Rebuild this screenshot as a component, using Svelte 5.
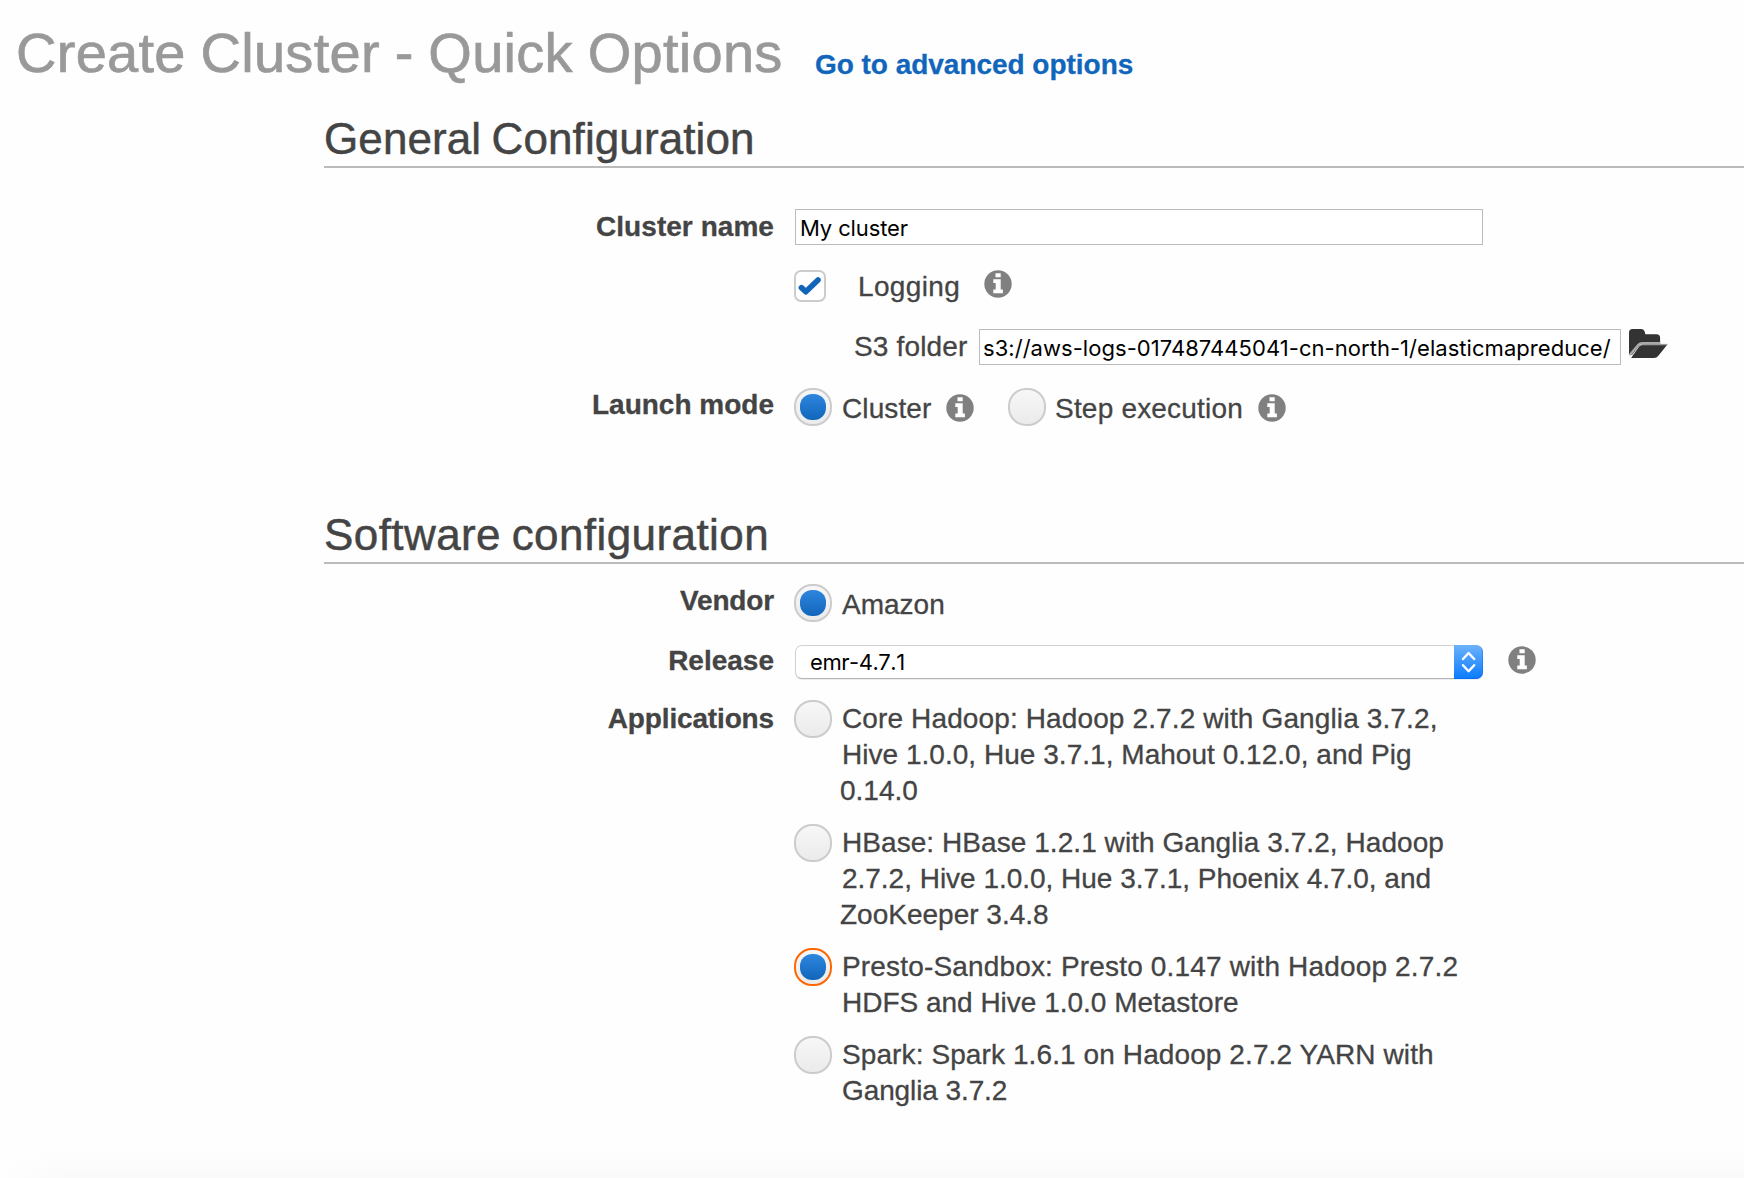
<script>
  let clusterName = $state('My cluster');
  let s3Folder = $state('s3://aws-logs-017487445041-cn-north-1/elasticmapreduce/');

  // Each application bundle, with its description split into lines and their tracking in px.
  const applications = [
    {
      lines: [
        { text: 'Core Hadoop: Hadoop 2.7.2 with Ganglia 3.7.2,', track: 0.125 },
        { text: 'Hive 1.0.0, Hue 3.7.1, Mahout 0.12.0, and Pig', track: 0.03 },
        { text: '0.14.0', track: 0 }
      ]
    },
    {
      lines: [
        { text: 'HBase: HBase 1.2.1 with Ganglia 3.7.2, Hadoop', track: 0.06 },
        { text: '2.7.2, Hive 1.0.0, Hue 3.7.1, Phoenix 4.7.0, and', track: -0.02 },
        { text: 'ZooKeeper 3.4.8', track: 0 }
      ]
    },
    {
      selected: true,
      lines: [
        { text: 'Presto-Sandbox: Presto 0.147 with Hadoop 2.7.2', track: 0.165 },
        { text: 'HDFS and Hive 1.0.0 Metastore', track: -0.01 }
      ]
    },
    {
      lines: [
        { text: 'Spark: Spark 1.6.1 on Hadoop 2.7.2 YARN with', track: 0.1 },
        { text: 'Ganglia 3.7.2', track: -0.1 }
      ]
    }
  ];
</script>

{#snippet info()}
  <svg class="info" viewBox="0 0 28 28" aria-label="Info">
    <circle cx="14" cy="14" r="13.7" fill="#808080" />
    <path d="M11.5 3.2h5.2v4h-5.2zM9.3 9.3h7.4v10.3h2.2v3.6H9.3v-3.6h2.4v-6.7H9.3z" fill="#fff" />
  </svg>
{/snippet}

{#snippet radio(selected, focused)}
  <span class="radio" class:selected class:focused role="radio" aria-checked={selected} tabindex="0"></span>
{/snippet}

<div class="page">
  <header>
    <h1>Create Cluster - Quick Options</h1>
    <a href="#advanced">Go to advanced options</a>
  </header>

  <section class="general">
    <h2>General Configuration</h2>
    <div class="row name-row">
      <span class="label wide">Cluster name</span>
      <input class="name-input" bind:value={clusterName} />
    </div>
    <div class="row logging-row">
      <span class="label"></span>
      <span class="checkbox" role="checkbox" aria-checked="true" tabindex="0">
        <svg viewBox="0 0 32 32">
          <path d="M7.4 17.6l4.4 4.2L24 10" fill="none" stroke="#1166bb" stroke-width="5.6" stroke-linecap="round" stroke-linejoin="round" />
        </svg>
      </span>
      <span class="text logging">Logging</span>
      {@render info()}
    </div>
    <div class="row folder-row">
      <span class="label"></span>
      <span class="text folder">S3 folder</span>
      <input class="folder-input" bind:value={s3Folder} />
      <svg class="folder-icon" viewBox="0 0 40 31">
        <path d="M1 26.5V4.5Q1 1 4.5 1H13q3 0 3.8 3l.5 2.2H28.5q3.6 0 3.6 3.6v5.8H13L4 27z" fill="#333" />
        <path d="M1.6 27.2L10.2 17q1.6-1.8 4.2-1.8h18" fill="none" stroke="#aaa" stroke-width="2.4" />
        <path d="M3.2 29.8L11.2 18.6q1.1-1.5 3-1.5H39l-8.6 10.7q-1.8 2.3-4.4 2.3H3.5z" fill="#333" />
        <path d="M14 16.6h25.4" stroke="#999" stroke-width="1.4" />
      </svg>
    </div>
    <div class="row launch-row">
      <span class="label">Launch mode</span>
      {@render radio(true, false)}
      <span class="text cluster">Cluster</span>
      {@render info()}
      <span class="second">{@render radio(false, false)}</span>
      <span class="text step">Step execution</span>
      {@render info()}
    </div>
  </section>

  <section class="software">
    <h2>Software configuration</h2>
    <div class="row vendor-row">
      <span class="label snug">Vendor</span>
      {@render radio(true, false)}
      <span class="text">Amazon</span>
    </div>
    <div class="row release-row">
      <span class="label">Release</span>
      <div class="select" role="combobox" aria-expanded="false" aria-controls="release" tabindex="0">
        <span class="value" id="release">emr-4.7.1</span>
        <span class="stepper">
          <svg viewBox="0 0 29 34">
            <path d="M9 14l5.6-6 5.6 6M9 20.2l5.6 6 5.6-6" fill="none" stroke="#fff" stroke-width="2.4" stroke-linecap="round" stroke-linejoin="round" />
          </svg>
        </span>
      </div>
      {@render info()}
    </div>
    <div class="row">
      <span class="label snug">Applications</span>
      <div class="apps">
        {#each applications as app}
          <div class="app">
            {@render radio(!!app.selected, !!app.selected)}
            <div class="text">
              {#each app.lines as line}
                <div class="line" style:letter-spacing="{line.track}px">{line.text}</div>
              {/each}
            </div>
          </div>
        {/each}
      </div>
    </div>
  </section>

  <div class="shade"></div>
</div>

<style>
  :global(body) {
    background: #fefefe;
  }
  .page {
    box-sizing: border-box;
    height: 1178px;
    display: flex;
    flex-direction: column;
    overflow: hidden;
    font: 28px/36px 'Liberation Sans', Arial, sans-serif;
    color: #444;
    white-space: nowrap;
    -webkit-text-stroke: 0.3px;
  }
  header {
    box-sizing: border-box;
    height: 114px;
    padding-left: 16px;
    display: flex;
    align-items: flex-start;
  }
  h1 {
    margin: 21px 0 0;
    width: 799px;
    font-size: 56px;
    line-height: 64px;
    font-weight: 400;
    letter-spacing: 0.27px;
    word-spacing: -1px;
    color: #999;
    -webkit-text-stroke: 0.7px;
  }
  header a {
    margin-top: 47px;
    font-weight: 700;
    letter-spacing: -0.03px;
    color: #1166bb;
    text-decoration: none;
  }
  section {
    margin-left: 324px;
  }
  .general {
    height: 396px;
  }
  h2 {
    margin: 0;
    padding-bottom: 2px;
    border-bottom: 2px solid #bbb;
    font-size: 44px;
    line-height: 50px;
    font-weight: 400;
    letter-spacing: 0.1px;
    word-spacing: -2px;
    -webkit-text-stroke: 0.5px;
  }
  .software h2 {
    letter-spacing: 0.42px;
  }
  .row {
    display: flex;
    align-items: flex-start;
  }
  .label {
    width: 450px;
    margin: 1px 20px 0 0;
    flex: none;
    text-align: right;
    font-weight: 700;
  }
  .label.wide {
    letter-spacing: 0.05px;
  }
  .label.snug {
    letter-spacing: -0.15px;
  }
  .name-row {
    height: 60px;
    padding-top: 40px;
  }
  .logging-row {
    height: 60px;
  }
  .folder-row {
    height: 58px;
  }
  .vendor-row {
    height: 60px;
    padding-top: 18px;
  }
  .release-row {
    height: 58px;
  }
  input {
    box-sizing: border-box;
    height: 36px;
    margin: 1px 0 0 1px;
    padding: 2px 0 0 4px;
    border: 1px solid #bbb;
    border-radius: 0;
    background: #fff;
    outline: none;
    font: 22px Inter, sans-serif;
    color: #000;
    -webkit-text-stroke: 0;
  }
  .name-input {
    width: 688px;
    letter-spacing: -0.13px;
  }
  .folder-input {
    width: 642px;
    margin-left: 12px;
    padding-left: 3px;
    letter-spacing: 0.043px;
  }
  .info {
    width: 28px;
    height: 28px;
    flex: none;
  }
  .checkbox {
    box-sizing: border-box;
    width: 32px;
    height: 32px;
    margin-top: 2px;
    border: 2px solid #ccc;
    border-radius: 7px;
    background: #fff;
  }
  .checkbox svg {
    display: block;
    width: 32px;
    height: 32px;
    margin: -2px;
  }
  .text {
    margin-top: 1px;
  }
  .logging {
    width: 126px;
    margin-left: 32px;
    letter-spacing: 0.35px;
  }
  .logging-row .info {
    margin: 2px 0 0 0;
  }
  .folder {
    width: 113px;
    margin-left: 60px;
    letter-spacing: 0.15px;
  }
  .folder-icon {
    width: 40px;
    height: 31px;
    margin-left: 7px;
  }
  .radio {
    box-sizing: border-box;
    display: block;
    width: 38px;
    height: 38px;
    flex: none;
    padding: 4px;
    border: 2px solid #ccc;
    border-radius: 18px;
    background: linear-gradient(#f7f7f7, #ebebeb);
  }
  .radio.selected::before {
    content: '';
    display: block;
    width: 26px;
    height: 26px;
    border-radius: 12px;
    background: linear-gradient(#2f86de, #1166bb);
  }
  .radio.focused {
    border-color: #f60;
  }
  .radio + .text {
    margin-left: 10px;
  }
  .launch-row .radio,
  .vendor-row .radio {
    margin-top: 2px;
  }
  .launch-row .text,
  .vendor-row .text {
    margin-top: 5px;
  }
  .launch-row .info {
    margin-top: 8px;
  }
  .launch-row .cluster {
    width: 104px;
    letter-spacing: 0.1px;
  }
  .second {
    margin-left: 34px;
  }
  .launch-row .step {
    width: 203px;
    margin-left: 9px;
    letter-spacing: 0.2px;
  }
  .select {
    box-sizing: border-box;
    width: 688px;
    height: 34px;
    margin: 3px 25px 0 1px;
    display: flex;
    border: 1px solid #d2d2d2;
    border-bottom-color: #b4b4b4;
    border-radius: 7px;
    background: #fff;
    box-shadow: 0 1px 1px rgba(0, 0, 0, 0.08);
    -webkit-text-stroke: 0;
  }
  .value {
    flex: 1;
    padding-left: 14px;
    font: 22px/32px Inter, sans-serif;
    font-kerning: none;
    letter-spacing: -0.45px;
    color: #000;
  }
  .stepper {
    width: 29px;
    height: 34px;
    margin: -1px -1px 0 0;
    border-radius: 0 7px 7px 0;
    background: linear-gradient(#6bb2fb, #0a7bff);
    box-shadow: inset -1px -1px 0 rgba(0, 90, 240, 0.35);
  }
  .stepper svg {
    display: block;
    width: 29px;
    height: 34px;
  }
  .release-row .info {
    margin-top: 4px;
  }
  .apps {
    display: flex;
    flex-direction: column;
    gap: 16px;
  }
  .app {
    display: flex;
  }
  .app .text {
    margin-bottom: -1px;
  }
  .line:nth-child(3) {
    margin-left: -2px;
  }
  .shade {
    height: 26px;
    margin-top: auto;
    background: linear-gradient(90deg, #fefefe, rgba(254, 254, 254, 0) 70px), linear-gradient(#fefefe, #fafafa);
  }
</style>
